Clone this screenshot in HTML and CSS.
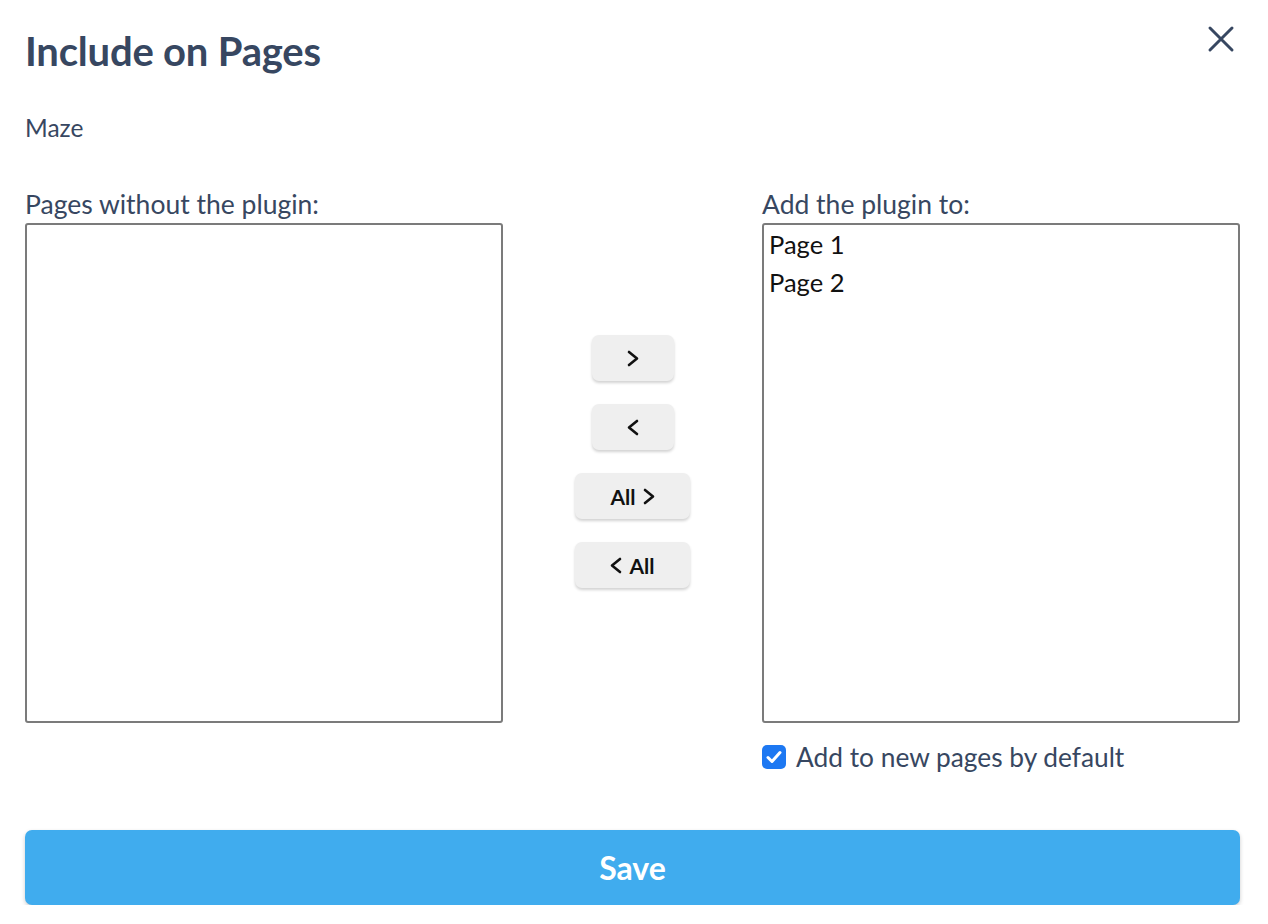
FILE: index.html
```html
<!DOCTYPE html>
<html>
<head>
    <title>Include on Pages</title>
    <link rel="stylesheet" href="styles.css">
</head>
<body>
    <div class="dialog">
        <div class="header">
            <h2>Include on Pages</h2>
            <button class="close" aria-label="Close">
                <svg width="28" height="28" viewBox="0 0 28 28">
                    <path d="M3 3 L25 25 M25 3 L3 25" stroke="#374761" stroke-width="3" stroke-linecap="round" fill="none"/>
                </svg>
            </button>
        </div>
        <div class="plugin-name">Maze</div>

        <div class="columns">
            <div class="column">
                <label>Pages without the plugin:</label>
                <div class="listbox"></div>
            </div>
            <div class="moves">
                <button class="move" aria-label="Move right">
                    <svg class="chev" width="12" height="17" viewBox="0 0 12 17"><path d="M2 2 L10 8.5 L2 15"/></svg>
                </button>
                <button class="move" aria-label="Move left">
                    <svg class="chev" width="12" height="17" viewBox="0 0 12 17"><path d="M10 2 L2 8.5 L10 15"/></svg>
                </button>
                <button class="move wide">All
                    <svg class="chev" width="12" height="17" viewBox="0 0 12 17"><path d="M2 2 L10 8.5 L2 15"/></svg>
                </button>
                <button class="move wide">
                    <svg class="chev" width="12" height="17" viewBox="0 0 12 17"><path d="M10 2 L2 8.5 L10 15"/></svg>
                All</button>
            </div>
            <div class="column">
                <label>Add the plugin to:</label>
                <div class="listbox">
                    <div class="option">Page 1</div>
                    <div class="option">Page 2</div>
                </div>
                <div class="default-row">
                    <span class="checkbox">
                        <svg width="16" height="14" viewBox="0 0 16 14">
                            <path d="M2 7.5 L6 11.5 L14 2.5" stroke="#fff" stroke-width="3" stroke-linecap="round" stroke-linejoin="round" fill="none"/>
                        </svg>
                    </span>
                    <span>Add to new pages by default</span>
                </div>
            </div>
        </div>

        <button class="save">Save</button>
    </div>
</body>
</html>
```

FILE: styles.css
```css
body {
    margin: 0;
    font-family: Lato, "Noto Sans", sans-serif;
    color: #374761;
    background-color: white;
}
.dialog {
    padding: 22px 28px 0 25px;
}
.header {
    display: flex;
    justify-content: space-between;
    align-items: flex-start;
}
h2 {
    margin: 0;
    font-size: 40px;
    font-weight: bold;
    line-height: 58px;
    letter-spacing: -0.2px;
}
.close {
    border: none;
    background: none;
    padding: 0;
    margin-top: 3px;
    margin-right: 5px;
    cursor: pointer;
}
.plugin-name {
    font-size: 24.5px;
    margin-top: 33px;
    line-height: 30px;
}
.columns {
    display: grid;
    grid-template-columns: 478px 1fr 478px;
    margin-top: 46px;
}
.column label {
    display: block;
    font-size: 26.5px;
    line-height: 30px;
    margin-bottom: 4px;
}
.listbox {
    height: 496px;
    border: 2px solid #7b7b7b;
    border-radius: 3px;
    padding: 0 5px;
}
.option {
    font-size: 25.5px;
    line-height: 38px;
    color: #111;
}
.moves {
    display: flex;
    flex-direction: column;
    align-items: center;
    gap: 23px;
    padding-top: 146px;
}
.move {
    width: 82px;
    height: 46px;
    border: none;
    border-radius: 7px;
    background-color: #efefef;
    box-shadow: 0 2px 3px rgba(0,0,0,0.18);
    font-family: Lato, sans-serif;
    font-size: 21px;
    font-weight: bold;
    color: #111;
    cursor: pointer;
    display: flex;
    align-items: center;
    justify-content: center;
    gap: 7px;
    padding: 0;
}
.move.wide {
    width: 115px;
}
.chev path {
    fill: none;
    stroke: #111;
    stroke-width: 2.6;
    stroke-linecap: round;
    stroke-linejoin: round;
}
.default-row {
    display: flex;
    align-items: center;
    gap: 10px;
    margin-top: 19px;
    font-size: 26.3px;
    line-height: 30px;
}
.checkbox {
    width: 24px;
    height: 24px;
    border-radius: 5px;
    background-color: #1d78f2;
    display: flex;
    align-items: center;
    justify-content: center;
}
.save {
    display: block;
    width: 100%;
    height: 75px;
    margin-top: 58px;
    border: none;
    border-radius: 7px;
    background-color: #40acee;
    box-shadow: 0 2px 4px rgba(0,0,0,0.2);
    color: white;
    font-family: Lato, sans-serif;
    font-size: 32px;
    font-weight: bold;
    cursor: pointer;
}
```
